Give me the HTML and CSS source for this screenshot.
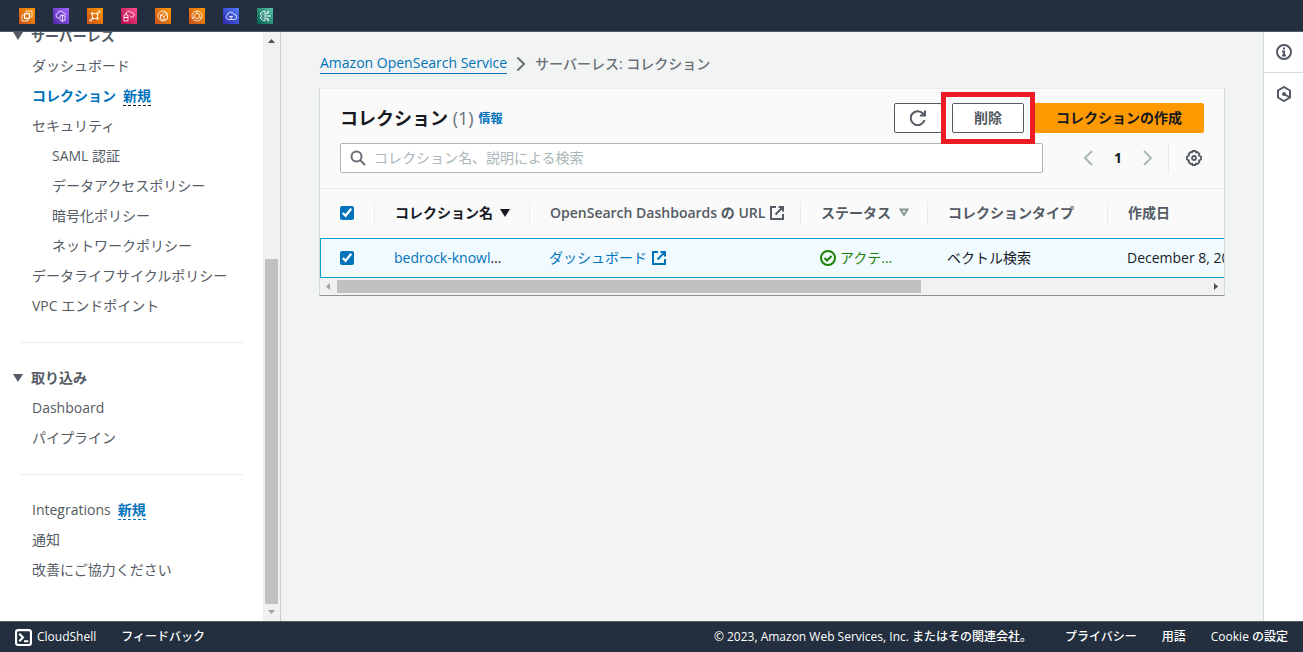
FILE: index.html
```
<!DOCTYPE html>
<html lang="ja">
<head>
    <meta charset="UTF-8">
    <meta name="viewport" content="width=device-width, initial-scale=1.0">
    <title>Amazon OpenSearch Service</title>
    <link rel="stylesheet" href="styles.css">
</head>
<body>
    <header class="topbar">
        <a href="#" class="service orange" aria-label="EC2"><svg viewBox="0 0 16 16"><rect x="5.500" y="5.500" width="5" height="5" rx="1" stroke-width="1.300"/><path d="M7 4V3h6v6h-1.500M4.500 7H3v6h6v-1.500"/></svg></a>
        <a href="#" class="service purple" aria-label="VPC"><svg viewBox="0 0 16 16"><path d="M6 10H5a2.300 2.300 0 0 1-.3-4.500 3.200 3.200 0 0 1 6-.5 2.500 2.500 0 0 1 2 2M7 8l2.500-1L12 8v4l-2.500 1.500L7 12zM9.500 7v6"/></svg></a>
        <a href="#" class="service orange" aria-label="Glue"><svg viewBox="0 0 16 16"><path d="M3 13l3-3M13 3l-3 3M5 5.500h6M5 10.500h6M5.500 5v6M10.500 5v6M3 11v2h2M11 3h2v2"/><path class="fill" d="M4 4.500h2v2H4zM9.500 4.500h2v2h-2zM4.500 9.500h2v2h-2zM9.500 9.500h2v2h-2z"/></svg></a>
        <a href="#" class="service pink" aria-label="Systems Manager"><svg viewBox="0 0 16 16"><path d="M5 6c0-3 4-4 5-1.500 2 0 3 1 3 2.500S12 9 11 9H9M3 7h4v2.500H3zM3 9.500h4V13H3zM4 5.500h2"/></svg></a>
        <a href="#" class="service orange" aria-label="Lightsail"><svg viewBox="0 0 16 16"><path d="M12 5a5 5 0 1 0 .5 5M5.500 7l4-2.500 3 1.500v4.500L9 12.500M5.500 7v4L9 12.500V8.500L5.500 7M9 8.500l3.500-2.500"/></svg></a>
        <a href="#" class="service orange" aria-label="ECS"><svg viewBox="0 0 16 16"><circle cx="8" cy="8" r="5"/><circle cx="8" cy="8" r="2.600"/><path d="M8 3v2.400M12.500 10l-2-1M3.500 10l2-1"/></svg></a>
        <a href="#" class="service blue" aria-label="Cloud"><svg viewBox="0 0 16 16"><path d="M5 11.500A2.500 2.500 0 0 1 4.300 7 3.500 3.500 0 0 1 11 6.500a2.500 2.500 0 0 1 .5 5zM6.500 8.500h3L8 10.500z"/></svg></a>
        <a href="#" class="service green" aria-label="Bedrock"><svg viewBox="0 0 16 16"><path d="M8 3v10L5.500 12 3.500 10.500V9L5 8 3.500 7V5L6 3.500zM8 5.500h3V4M8 8h4M8 10.500h3V12M5 5.500L6.500 7M5 10.500L6.500 9"/><circle cx="11" cy="3.700" r=".7"/><circle cx="12.500" cy="8" r=".7"/><circle cx="11" cy="12.300" r=".7"/></svg></a>
    </header>

    <div class="layout">
        <aside class="sidebar">
            <nav class="side-nav">
                <button class="nav-heading"><span class="caret"></span>サーバーレス</button>
                <a href="#">ダッシュボード</a>
                <a href="#" class="active">コレクション<span class="new">新規</span></a>
                <a href="#">セキュリティ</a>
                <a href="#" class="sub">SAML 認証</a>
                <a href="#" class="sub">データアクセスポリシー</a>
                <a href="#" class="sub">暗号化ポリシー</a>
                <a href="#" class="sub">ネットワークポリシー</a>
                <a href="#">データライフサイクルポリシー</a>
                <a href="#">VPC エンドポイント</a>
                <hr>
                <button class="nav-heading"><span class="caret"></span>取り込み</button>
                <a href="#">Dashboard</a>
                <a href="#">パイプライン</a>
                <hr>
                <a href="#">Integrations<span class="new">新規</span></a>
                <a href="#">通知</a>
                <a href="#">改善にご協力ください</a>
            </nav>
            <div class="scroll-v">
                <svg class="arrow" viewBox="0 0 17 17"><path d="M5 11h7L8.500 7z" fill="#505050"/></svg>
                <div class="thumb"></div>
                <svg class="arrow" viewBox="0 0 17 17"><path d="M5 6h7l-3.500 4z" fill="#a3a3a3"/></svg>
            </div>
        </aside>

        <main class="main">
            <nav class="breadcrumb">
                <a href="#">Amazon OpenSearch Service</a>
                <svg class="icon" viewBox="0 0 16 16"><path d="M4.500 1.500L11 8l-6.500 6.500"/></svg>
                <span>サーバーレス: コレクション</span>
            </nav>

            <section class="card">
                <div class="card-header">
                    <div class="title-row">
                        <h1>コレクション <span class="count">(1)</span></h1>
                        <a href="#" class="info">情報</a>
                        <div class="actions">
                            <button class="btn btn-icon" aria-label="更新"><svg class="icon" viewBox="0 0 16 16"><path d="M14.500 10A7 7 0 1 1 13 3.500L15 5.500M15 .5v5h-5"/></svg></button>
                            <span class="highlight"><button class="btn">削除</button></span>
                            <button class="btn btn-primary">コレクションの作成</button>
                        </div>
                    </div>
                    <div class="filter-row">
                        <div class="search">
                            <svg class="icon" viewBox="0 0 16 16"><circle cx="6.500" cy="6.500" r="5"/><path d="M10 10l5 5"/></svg>
                            <input type="text" placeholder="コレクション名、説明による検索" aria-label="コレクション名、説明による検索">
                        </div>
                        <div class="pager">
                            <button aria-label="前へ"><svg class="icon" viewBox="0 0 16 16"><path d="M12 1L5 8l7 7"/></svg></button>
                            <button class="page">1</button>
                            <button aria-label="次へ"><svg class="icon" viewBox="0 0 16 16"><path d="M4 1l7 7-7 7"/></svg></button>
                        </div>
                        <button class="settings" aria-label="設定"><svg class="icon gear" viewBox="0 0 16 16"><path d="M6.600 1h2.800l.6 1.300L11.400 2l2 2-.4 1.500 2 1v3l-2 1 .4 1.500-2 2-1.400-.4L9.400 15H6.600L6 13.600l-1.400.4-2-2 .4-1.500-2-1v-3l2-1L2.600 4l2-2L6 2.300z"/><circle cx="8" cy="8" r="2"/></svg></button>
                    </div>
                </div>

                <div class="table-wrap">
                    <table>
                        <colgroup>
                            <col class="col-check">
                            <col class="col-name">
                            <col class="col-url">
                            <col class="col-status">
                            <col class="col-type">
                            <col>
                        </colgroup>
                        <thead>
                            <tr>
                                <th><input type="checkbox" aria-label="すべて選択" checked></th>
                                <th class="sorted"><div class="cell">コレクション名 <span class="caret"></span></div></th>
                                <th><div class="cell">OpenSearch Dashboards の URL <svg class="icon" viewBox="0 0 16 16"><path d="M7 2H2v12h12V9M9.500 2H14v4.500M14 2L6.500 9.500"/></svg></div></th>
                                <th><div class="cell">ステータス <svg class="sort" viewBox="0 0 10 9"><path d="M1.500 1.500h7L5 7z"/></svg></div></th>
                                <th><div class="cell">コレクションタイプ</div></th>
                                <th><div class="cell">作成日</div></th>
                            </tr>
                        </thead>
                        <tbody>
                            <tr>
                                <td><input type="checkbox" aria-label="行を選択" checked></td>
                                <td><a href="#">bedrock-knowl</a>…</td>
                                <td><a href="#" class="cell">ダッシュボード <svg class="icon" viewBox="0 0 16 16"><path d="M7 2H2v12h12V9M9.500 2H14v4.500M14 2L6.500 9.500"/></svg></a></td>
                                <td><div class="status"><svg class="icon" viewBox="0 0 16 16"><circle cx="8" cy="8" r="7"/><path d="M4.500 8L7 10.500 11.500 6"/></svg>アクテ…</div></td>
                                <td>ベクトル検索</td>
                                <td>December 8, 2023</td>
                            </tr>
                        </tbody>
                    </table>
                </div>
                <div class="scroll-h">
                    <svg class="arrow" viewBox="0 0 17 17"><path d="M10 5v7L6 8.500z" fill="#a3a3a3"/></svg>
                    <div class="thumb"></div>
                    <svg class="arrow" viewBox="0 0 17 17"><path d="M7 5v7l4-3.500z" fill="#505050"/></svg>
                </div>
            </section>
        </main>

        <aside class="tools">
            <button aria-label="情報"><svg class="icon" viewBox="0 0 16 16"><circle cx="8" cy="8" r="7"/><path d="M6 7.500h2v4M6 11.500h4M7 4.500h2"/></svg></button>
            <button aria-label="チュートリアル"><svg class="icon" viewBox="0 0 16 16"><path d="M8 1l6 3.500v7L8 15l-6-3.500v-7zM8 8l5 3"/><circle cx="8" cy="8" r="1"/></svg></button>
        </aside>
    </div>

    <footer class="footer">
        <a href="#" class="cloudshell"><svg viewBox="0 0 16 16"><rect x="1" y="1" width="14" height="14" rx="2"/><path d="M4 4.500L7.500 8 4 11.500M8.500 11.500h4"/></svg>CloudShell</a>
        <a href="#">フィードバック</a>
        <span class="copyright">© 2023, Amazon Web Services, Inc. またはその関連会社。</span>
        <a href="#">プライバシー</a>
        <a href="#">用語</a>
        <a href="#">Cookie の設定</a>
    </footer>
</body>
</html>
```

FILE: styles.css
```
* {
    box-sizing: border-box;
}
body {
    margin: 0;
    height: 100vh;
    display: flex;
    flex-direction: column;
    overflow: hidden;
    font-family: "Open Sans", "Noto Sans CJK JP", sans-serif;
    font-size: 14px;
    line-height: 20px;
    color: #16191f;
    background-color: #f2f3f3;
}
a {
    color: #0073bb;
    text-decoration: none;
}
button, input {
    font: inherit;
    color: inherit;
}
button {
    padding: 0;
    border: 0;
    background: none;
}
svg {
    display: block;
    flex: none;
    fill: none;
    stroke: currentColor;
}
.icon {
    width: 16px;
    height: 16px;
    stroke-width: 2;
}
.caret {
    width: 0;
    height: 0;
    border: 5px solid transparent;
    border-top: 8px solid currentColor;
    border-bottom: 0;
}

/* Top bar */
.topbar {
    flex: none;
    display: flex;
    align-items: center;
    gap: 18px;
    height: 32px;
    padding: 0 19px;
    background-color: #232f3e;
    border-bottom: 1px solid #545b64;
}
.service {
    width: 16px;
    height: 16px;
    color: #fff;
}
.service svg {
    stroke-width: 0.8;
}
.service .fill {
    fill: #fff;
    stroke: none;
}
.orange {
    background: linear-gradient(45deg, #c8511b, #f90);
}
.purple {
    background: linear-gradient(45deg, #4d27a8, #a166ff);
}
.pink {
    background: linear-gradient(45deg, #b0084d, #ff4f8b);
}
.blue {
    background: linear-gradient(45deg, #2e27ad, #527fff);
}
.green {
    background: linear-gradient(45deg, #055f4e, #56c0a7);
}

/* Page layout */
.layout {
    flex: 1;
    display: flex;
    min-height: 0;
}
.sidebar {
    flex: none;
    display: flex;
    width: 281px;
    background-color: #fff;
    border-right: 1px solid #ccc;
    overflow: hidden;
}
.side-nav {
    flex: 1;
    display: flex;
    flex-direction: column;
    justify-content: flex-end;
    padding: 0 20px 36px;
    color: #545b64;
}
.side-nav a {
    flex: none;
    padding: 5px 0 5px 12px;
    color: inherit;
    white-space: nowrap;
}
.side-nav a.sub {
    padding-left: 32px;
}
.side-nav a.active {
    color: #0073bb;
    font-weight: 700;
}
.side-nav hr {
    flex: none;
    width: 100%;
    height: 1px;
    margin: 21px 0 20px;
    border: 0;
    background-color: #eaeded;
}
.nav-heading {
    flex: none;
    display: flex;
    align-items: center;
    gap: 8px;
    height: 30px;
    margin-left: -7px;
    font-weight: 700;
}
.new {
    margin-left: 7px;
    color: #0073bb;
    font-weight: 700;
    border-bottom: 1px dashed #0073bb;
}
.active .new {
    border-bottom-color: #16191f;
}

/* Scroll bars */
.scroll-v, .scroll-h {
    flex: none;
    display: flex;
    justify-content: space-between;
    background-color: #f1f1f1;
}
.arrow {
    width: 17px;
    height: 17px;
    stroke: none;
}
.scroll-v {
    flex-direction: column;
    width: 17px;
}
.scroll-v .thumb {
    flex: 0 0 345px;
    width: 13px;
    margin: auto 2px 0;
    background-color: #c1c1c1;
}
.scroll-h {
    height: 17px;
}
.scroll-h .thumb {
    width: 584px;
    height: 13px;
    margin: 2px auto 2px 0;
    background-color: #c1c1c1;
}

/* Main content */
.main {
    flex: 1;
    min-width: 0;
    padding: 21px 38px;
}
.breadcrumb {
    display: flex;
    align-items: center;
    gap: 6px;
    margin: 0 1px 14px;
    color: #687078;
}
.breadcrumb a {
    border-bottom: 1px solid #0073bb;
}
.breadcrumb span {
    font-weight: 500;
}
.card {
    background-color: #fafafa;
    border: 1px solid #d5dbdb;
    border-top-color: #eaeded;
    border-bottom-color: #879596;
}
.card-header {
    padding: 14px 20px 15px;
    border-bottom: 1px solid #eaeded;
}
.title-row {
    display: flex;
    align-items: center;
    gap: 5px;
    height: 30px;
    margin-bottom: 10px;
}
h1 {
    margin: 0;
    font-size: 18px;
    line-height: 22px;
    font-weight: 700;
}
.count {
    color: #687078;
    font-weight: 400;
}
.info {
    padding-top: 2px;
    font-size: 12px;
    font-weight: 700;
}
.actions {
    display: flex;
    gap: 10px;
    margin-left: auto;
}
.btn {
    height: 30px;
    padding: 0 21px;
    color: #545b64;
    font-weight: 700;
    background-color: #fff;
    border: 1px solid #545b64;
    border-radius: 2px;
}
.btn-icon {
    padding: 0 15px;
}
.btn-primary {
    color: #16191f;
    background-color: #f90;
    border-color: #f90;
}
.highlight {
    position: relative;
    z-index: 1;
}
.highlight::after {
    content: "";
    position: absolute;
    inset: -11px;
    border: 5px solid #ed1c24;
    pointer-events: none;
}
.filter-row {
    display: flex;
    align-items: center;
    height: 30px;
}
.search {
    flex: 1;
    display: flex;
    align-items: center;
    gap: 8px;
    height: 30px;
    padding: 0 9px;
    color: #687078;
    background-color: #fff;
    border: 1px solid #aab7b8;
    border-radius: 2px;
}
.search input {
    flex: 1;
    min-width: 0;
    padding: 0;
    border: 0;
    outline: 0;
    background: none;
}
.search input::placeholder {
    color: #aab7b8;
}
.pager {
    display: flex;
    align-items: center;
    padding: 0 12px 0 37px;
    color: #aab7b8;
}
.pager .page {
    width: 44px;
    color: #16191f;
    font-weight: 700;
}
.settings {
    height: 30px;
    padding: 0 2px 0 17px;
    color: #545b64;
    border-left: 1px solid #eaeded;
}
.gear {
    stroke-width: 1.8;
}

/* Table */
.table-wrap {
    overflow: hidden;
}
table {
    width: 1349px;
    table-layout: fixed;
    border-collapse: separate;
    border-spacing: 0;
}
.col-check {
    width: 55px;
}
.col-name {
    width: 155px;
}
.col-url {
    width: 271px;
}
.col-status {
    width: 127px;
}
.col-type {
    width: 180px;
}
th {
    height: 49px;
    padding: 0 0 2px 20px;
    color: #545b64;
    font-weight: 600;
    text-align: left;
    white-space: nowrap;
    background: linear-gradient(#eaeded, #eaeded) right center / 1px 24px no-repeat;
}
th.sorted {
    color: #16191f;
}
td {
    height: 40px;
    padding: 0 0 0 19px;
    white-space: nowrap;
    background-color: #f1faff;
    border-top: 1px solid #00a1c9;
    border-bottom: 1px solid #00a1c9;
}
td:first-child {
    border-left: 1px solid #00a1c9;
}
.cell, .status {
    display: flex;
    align-items: center;
    gap: 4px;
}
.sorted .cell {
    gap: 7px;
}
.status {
    color: #1d8102;
}
.sort {
    width: 10px;
    height: 9px;
    stroke: #879596;
    stroke-width: 2;
    margin-left: 4px;
}
input[type="checkbox"] {
    display: block;
    width: 14px;
    height: 14px;
    margin: 0;
    accent-color: #0073bb;
}

/* Right tool strip */
.tools {
    flex: none;
    width: 40px;
    background-color: #fff;
    border-left: 1px solid #d5dbdb;
}
.tools button {
    display: flex;
    align-items: center;
    justify-content: center;
    width: 100%;
    height: 41px;
    color: #545b64;
}
.tools button:first-child {
    border-bottom: 1px solid #d5dbdb;
}

/* Footer */
.footer {
    flex: none;
    display: flex;
    align-items: center;
    gap: 25px;
    height: 31px;
    padding: 0 15px;
    font-size: 12px;
    font-weight: 500;
    background-color: #232f3e;
    border-top: 1px solid #545b64;
    color: #fff;
    white-space: nowrap;
}
.footer a {
    color: #fff;
}
.cloudshell {
    display: flex;
    align-items: center;
    gap: 5px;
}
.cloudshell svg {
    width: 17px;
    height: 17px;
    stroke-width: 2;
}
.copyright {
    margin: 0 8px 0 auto;
}
```
